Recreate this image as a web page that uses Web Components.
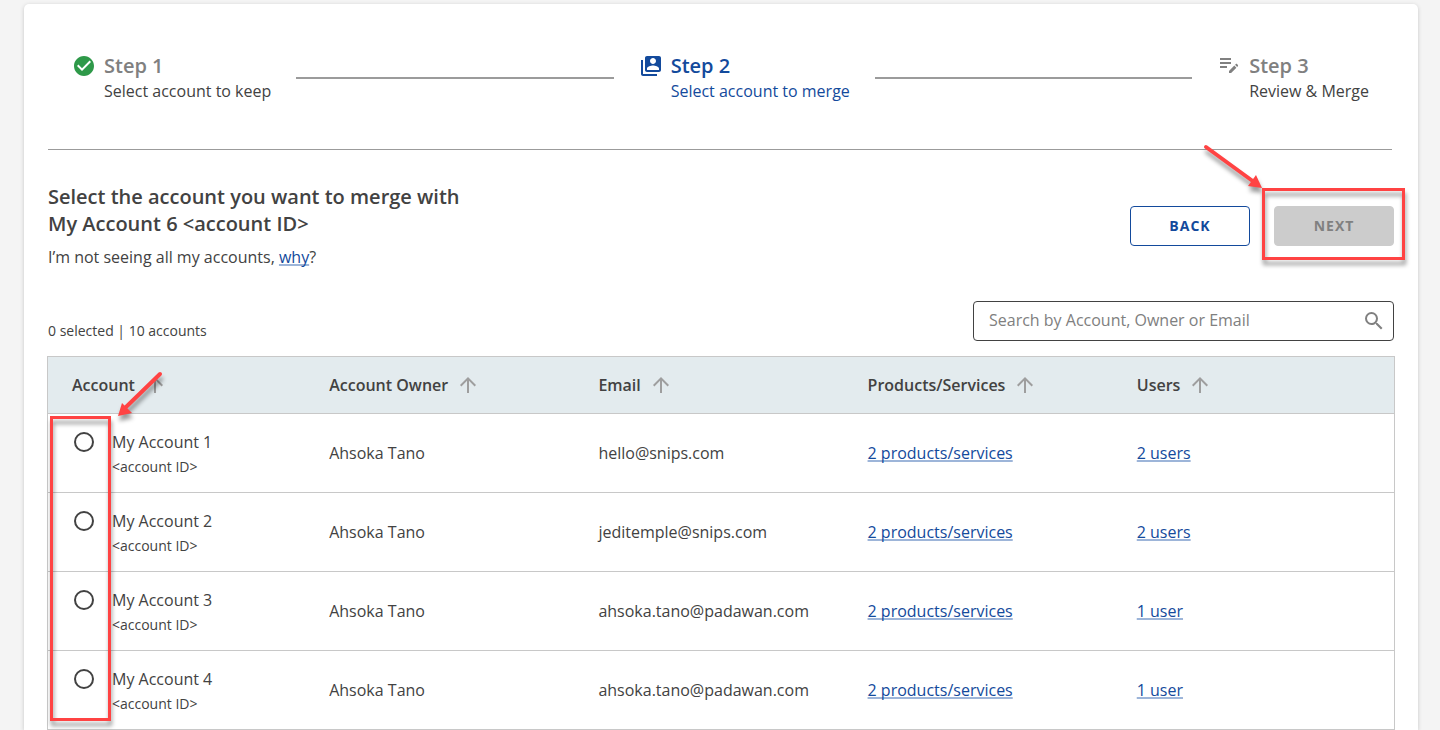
<!DOCTYPE html>
<html lang="en">
<head>
<meta charset="utf-8">
<title>Merge accounts</title>
<style>
  html {
    --ink: #424242;
    --muted: #808080;
    --line: #9b9b9b;
    --grid: #c8c8c8;
    --brand: #134a9c;
    --mark: #ff4343;
  }
  body {
    margin: 0;
    padding: 4px 22px 0 24px;
    background: #f4f4f4;
    color: var(--ink);
    font: 16px/24px "Open Sans", sans-serif;
  }
</style>
</head>
<body>
<merge-card>
  <step-list slot="steps">
    <step-item state="done" heading="Step 1">Select account to keep</step-item>
    <step-item state="current" heading="Step 2">Select account to merge</step-item>
    <step-item state="next" heading="Step 3">Review &amp; Merge</step-item>
  </step-list>
  <merge-header></merge-header>
  <table-toolbar></table-toolbar>
  <account-table></account-table>
</merge-card>

<script>
const define = (name, html, setup) => {
  const template = document.createElement('template');
  template.innerHTML = '<style>*{box-sizing:border-box}</style>' + html;
  customElements.define(name, class extends HTMLElement {
    constructor() {
      super();
      this.attachShadow({ mode: 'open' }).append(template.content.cloneNode(true));
    }
    connectedCallback() {
      if (setup && !this.ready) { this.ready = true; setup(this, this.shadowRoot); }
    }
  });
};

define('merge-card', `
  <style>
    :host { display: block; padding: 0 24px; background: #fff; border-radius: 5px 5px 0 0;
            box-shadow: 0 1px 4px rgba(0,0,0,.18); }
    header { padding: 48px 0 46px; margin-right: 2px; border-bottom: 1px solid var(--line); }
  </style>
  <header><slot name="steps"></slot></header>
  <main><slot></slot></main>`);

define('step-list', `
  <style>
    :host { display: block; }
    nav { display: flex; align-items: center; gap: 25px; padding: 0 23px 0 24px; }
    i { flex: 1; height: 2px; background: var(--line); }
  </style>
  <nav aria-label="Progress"></nav>`, (host, root) => {
  const nav = root.querySelector('nav');
  [...host.children].forEach((step, n) => {
    if (n) nav.append(document.createElement('i'));
    const slot = document.createElement('slot');
    slot.name = step.slot = 'step-' + n;
    nav.append(slot);
  });
});

const stepIcons = {
  done: '<path d="M12 2C6.48 2 2 6.48 2 12s4.48 10 10 10 10-4.48 10-10S17.52 2 12 2zm-2 15l-5-5 1.41-1.41L10 14.17l7.59-7.59L19 8l-9 9z"/>',
  current: '<path d="M4 6H2v14c0 1.100.9 2 2 2h14v-2H4V6zm16-4H8c-1.100 0-2 .9-2 2v12c0 1.100.9 2 2 2h12c1.100 0 2-.9 2-2V4c0-1.100-.9-2-2-2zm-6 2c1.660 0 3 1.340 3 3s-1.340 3-3 3-3-1.340-3-3 1.340-3 3-3zm6 12H8v-1.500c0-1.990 4-3 6-3s6 1.010 6 3V16z"/>',
  next: '<path d="M3 8h11v2H3V8zm0-2h11V4H3v2zm0 8h7v-2H3v2zm15.010-3.130.710-.710c.390-.390 1.020-.390 1.410 0l.710.710c.390.390.390 1.020 0 1.410l-.710.710-2.120-2.120zm-.710.710-5.300 5.300V19h2.120l5.300-5.300-2.120-2.120z"/>'
};
define('step-item', `
  <style>
    :host { display: flex; gap: 8px; }
    svg { width: 24px; height: 24px; margin-top: 2px; fill: var(--muted); }
    div { padding-top: 1px; }
    strong { display: block; font: 600 20px/26px "Open Sans", sans-serif; color: var(--muted); }
    :host([state=done]) svg { fill: #2e9949; }
    :host([state=current]) { color: var(--brand); }
    :host([state=current]) svg { fill: var(--brand); }
    :host([state=current]) strong { color: var(--brand); }
  </style>
  <svg viewBox="0 0 24 24" aria-hidden="true"></svg>
  <div><strong></strong><slot></slot></div>`, (host, root) => {
  root.querySelector('svg').innerHTML = stepIcons[host.getAttribute('state')];
  root.querySelector('strong').textContent = host.getAttribute('heading');
});

define('merge-header', `
  <style>
    :host { display: flex; justify-content: space-between; align-items: flex-start; padding-top: 33px; }
    h1 { margin: 0 0 8px; font: 600 20px/27px "Open Sans", sans-serif; }
    p { margin: 0; }
    a { color: var(--brand); text-underline-offset: 1px; text-decoration-color: #9db5d9; text-decoration-thickness: 2px; text-decoration-skip-ink: none; }
    div.actions { display: flex; gap: 24px; padding-top: 23px; }
    button { width: 120px; height: 40px; padding: 0; border: 1px solid var(--brand); border-radius: 4px;
             background: #fff; color: var(--brand); font: 700 14px/20px "Open Sans", sans-serif; letter-spacing: 1px; }
    button:disabled { border-color: #ccc; background: #ccc; color: var(--muted); }
    .target { position: relative; display: flex; }
    call-out { inset: -18px -11px -14px -12px; }
  </style>
  <div>
    <h1>Select the account you want to merge with<br>My Account 6 &lt;account ID&gt;</h1>
    <p>I’m not seeing all my accounts, <a href="#why">why</a>?</p>
  </div>
  <div class="actions">
    <button type="button">BACK</button>
    <div class="target">
      <button type="button" disabled>NEXT</button>
      <call-out arrow="right"></call-out>
    </div>
  </div>`);

define('table-toolbar', `
  <style>
    :host { display: flex; justify-content: space-between; align-items: flex-end; padding: 32px 0 15px; }
    output { font-size: 14px; line-height: 20px; }
    label { display: flex; align-items: center; width: 421px; height: 40px; padding: 0 7px 0 15px;
            border: 1px solid var(--ink); border-radius: 4px; }
    input { flex: 1; min-width: 0; border: 0; padding: 0 0 2px; outline: 0; background: none; color: inherit;
            font: 16px/24px "Open Sans", sans-serif; }
    input::placeholder { color: var(--muted); opacity: 1; }
    svg { width: 24px; height: 24px; fill: var(--muted); }
  </style>
  <output>0 selected | 10 accounts</output>
  <label>
    <input type="search" aria-label="Search accounts" placeholder="Search by Account, Owner or Email">
    <svg viewBox="0 0 24 24" aria-hidden="true"><path d="M15.500 14h-.79l-.28-.27A6.470 6.470 0 0 0 16 9.500 6.500 6.500 0 1 0 9.500 16c1.610 0 3.090-.59 4.230-1.570l.27.28v.79l5 4.990L20.490 19l-4.990-5zm-6 0C7.010 14 5 11.990 5 9.500S7.010 5 9.500 5 14 7.010 14 9.500 11.990 14 9.500 14z"/></svg>
  </label>`);

const accounts = [
  ['My Account 1', 'Ahsoka Tano', 'hello@snips.com', '2 products/services', '2 users'],
  ['My Account 2', 'Ahsoka Tano', 'jeditemple@snips.com', '2 products/services', '2 users'],
  ['My Account 3', 'Ahsoka Tano', 'ahsoka.tano@padawan.com', '2 products/services', '1 user'],
  ['My Account 4', 'Ahsoka Tano', 'ahsoka.tano@padawan.com', '2 products/services', '1 user']
];
const columns = ['Account', 'Account Owner', 'Email', 'Products/Services', 'Users'];
define('account-table', `
  <style>
    :host { display: block; position: relative; margin: 0 -1px; }
    table { width: 100%; table-layout: fixed; border-spacing: 0; border: 1px solid var(--grid); border-bottom: 0; }
    th, td { padding: 0 12px; border-bottom: 1px solid var(--grid); text-align: left; }
    th { height: 57px; background: #e3ebee; font-weight: 600; white-space: nowrap; }
    td { height: 79px; }
    th:first-child { padding-left: 24px; }
    td:first-child { padding-left: 26px; }
    th span { display: flex; align-items: center; gap: 8px; }
    th svg { width: 24px; height: 24px; fill: #9e9e9e; }
    label { display: grid; grid-template-columns: 20px 1fr; column-gap: 18px; align-items: center; padding-top: 4px; }
    small { grid-column: 2; font-size: 14px; line-height: 26px; }
    input { appearance: none; width: 20px; height: 20px; margin: 0; border: 2px solid var(--ink); border-radius: 50%; background: #fff; }
    input:checked { box-shadow: inset 0 0 0 3px #fff, inset 0 0 0 8px var(--brand); }
    a { color: var(--brand); text-underline-offset: 1px; text-decoration-color: #9db5d9; text-decoration-thickness: 2px; text-decoration-skip-ink: none; }
    call-out { left: 3px; top: 60px; width: 61px; bottom: 9px; }
  </style>
  <table>
    <thead><tr></tr></thead>
    <tbody></tbody>
  </table>
  <call-out arrow="left"></call-out>`, (host, root) => {
  root.querySelector('thead tr').innerHTML = columns.map(c =>
    `<th scope="col"><span>${c}<svg viewBox="0 0 24 24" aria-hidden="true"><path d="M4 12l1.410 1.410L11 7.830V20h2V7.830l5.580 5.590L20 12l-8-8-8 8z"/></svg></span></th>`).join('');
  root.querySelector('tbody').innerHTML = accounts.map(([name, owner, email, products, users]) => `
    <tr>
      <td><label><input type="radio" name="account"><span>${name}</span><small>&lt;account ID&gt;</small></label></td>
      <td>${owner}</td><td>${email}</td>
      <td><a href="#products">${products}</a></td><td><a href="#users">${users}</a></td>
    </tr>`).join('');
});

/* Red frame with an arrow pointing at one of its corners. */
define('call-out', `
  <style>
    :host { position: absolute; display: block; box-sizing: border-box; border: 3px solid var(--mark);
            filter: drop-shadow(1px 5px 2px rgba(0,0,0,.4)); pointer-events: none; }
    svg { position: absolute; width: 64px; height: 48px; overflow: visible; }
    path { fill: var(--mark); }
    line { stroke: var(--mark); stroke-width: 4; stroke-linecap: round; }
    svg { display: none; }
    :host([arrow=right]) .right { display: block; left: -65px; top: -49px; }
    :host([arrow=left]) .left { display: block; left: 60px; top: -49px; }
  </style>
  <svg class="right" aria-hidden="true"><line x1="6" y1="5" x2="54" y2="40"/><path d="M62 46L48 44L56 33Z"/></svg>
  <svg class="left" aria-hidden="true"><line x1="47" y1="4" x2="12" y2="38"/><path d="M5 46L9 33L19 43Z"/></svg>`);
</script>
</body>
</html>
